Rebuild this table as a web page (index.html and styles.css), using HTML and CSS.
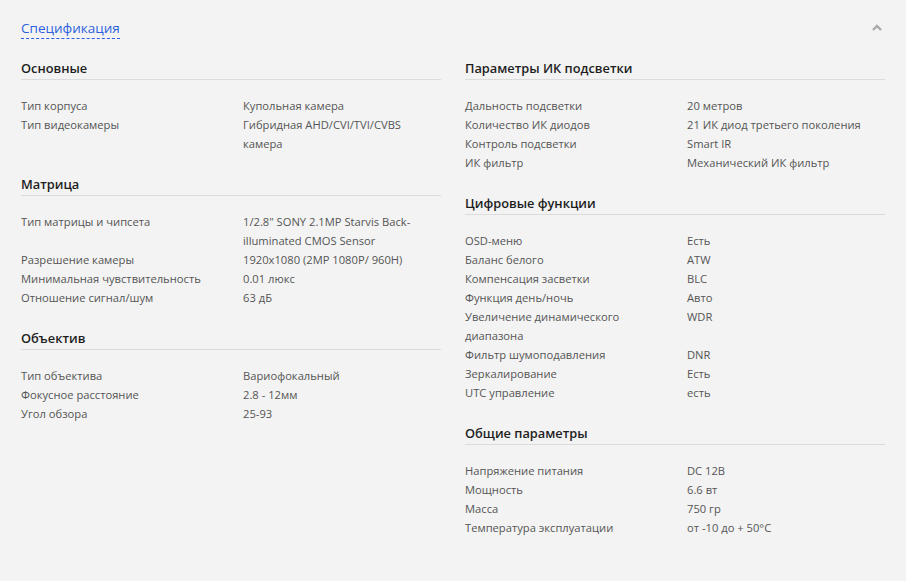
FILE: index.html
```html
<!DOCTYPE html>
<html lang="ru">
<head>
<meta charset="utf-8">
<title>Спецификация</title>
<link rel="stylesheet" href="styles.css">
</head>
<body>
<div class="spec">
  <div class="spec-head">
    <span class="spec-title">Спецификация</span>
    <svg class="chevron" width="10" height="7" viewBox="0 0 10 7"><path d="M1 6 L5 2 L9 6" fill="none" stroke="#a9a9a9" stroke-width="2.4"/></svg>
  </div>
  <div class="spec-grid">
    <div class="col">
      <section class="group">
        <h3 class="group-title">Основные</h3>
        <dl class="rows">
          <dt>Тип корпуса</dt><dd>Купольная камера</dd>
          <dt>Тип видеокамеры</dt><dd>Гибридная AHD/CVI/TVI/CVBS камера</dd>
        </dl>
      </section>
      <section class="group">
        <h3 class="group-title">Матрица</h3>
        <dl class="rows">
          <dt>Тип матрицы и чипсета</dt><dd>1/2.8" SONY 2.1MP Starvis Back-illuminated CMOS Sensor</dd>
          <dt>Разрешение камеры</dt><dd>1920x1080 (2MP 1080P/ 960H)</dd>
          <dt>Минимальная чувствительность</dt><dd>0.01 люкс</dd>
          <dt>Отношение сигнал/шум</dt><dd>63 дБ</dd>
        </dl>
      </section>
      <section class="group">
        <h3 class="group-title">Объектив</h3>
        <dl class="rows">
          <dt>Тип объектива</dt><dd>Вариофокальный</dd>
          <dt>Фокусное расстояние</dt><dd>2.8 - 12мм</dd>
          <dt>Угол обзора</dt><dd>25-93</dd>
        </dl>
      </section>
    </div>
    <div class="col">
      <section class="group">
        <h3 class="group-title">Параметры ИК подсветки</h3>
        <dl class="rows">
          <dt>Дальность подсветки</dt><dd>20 метров</dd>
          <dt>Количество ИК диодов</dt><dd>21 ИК диод третьего поколения</dd>
          <dt>Контроль подсветки</dt><dd>Smart IR</dd>
          <dt>ИК фильтр</dt><dd>Механический ИК фильтр</dd>
        </dl>
      </section>
      <section class="group">
        <h3 class="group-title">Цифровые функции</h3>
        <dl class="rows">
          <dt>OSD-меню</dt><dd>Есть</dd>
          <dt>Баланс белого</dt><dd>ATW</dd>
          <dt>Компенсация засветки</dt><dd>BLC</dd>
          <dt>Функция день/ночь</dt><dd>Авто</dd>
          <dt>Увеличение динамического диапазона</dt><dd>WDR</dd>
          <dt>Фильтр шумоподавления</dt><dd>DNR</dd>
          <dt>Зеркалирование</dt><dd>Есть</dd>
          <dt>UTC управление</dt><dd>есть</dd>
        </dl>
      </section>
      <section class="group">
        <h3 class="group-title">Общие параметры</h3>
        <dl class="rows">
          <dt>Напряжение питания</dt><dd>DC 12B</dd>
          <dt>Мощность</dt><dd>6.6 вт</dd>
          <dt>Масса</dt><dd>750 гр</dd>
          <dt>Температура эксплуатации</dt><dd>от -10 до + 50°C</dd>
        </dl>
      </section>
    </div>
  </div>
</div>
</body>
</html>
```
FILE: styles.css
```css
html, body {
  margin: 0;
  padding: 0;
  background: #f3f3f3;
}
body {
  font-family: "Open Sans", "Noto Sans", sans-serif;
  color: #555555;
}
.spec {
  padding: 19px 21px 0 21px;
}
.spec-head {
  display: flex;
  justify-content: space-between;
  align-items: center;
}
.spec-title {
  font-size: 13.5px;
  line-height: 18.5px;
  color: #2d5fdc;
  border-bottom: 1px dashed #2d5fdc;
}
.chevron {
  display: block;
  margin-right: 3px;
  margin-top: -3px;
}
.spec-grid {
  display: grid;
  grid-template-columns: 420px 420px;
  column-gap: 24px;
  margin-top: 20px;
}
.group {
  margin-bottom: 22.4px;
}
.group-title {
  margin: 0;
  font-size: 12.8px;
  line-height: 18px;
  font-weight: 600;
  color: #1e1e1e;
  padding-bottom: 2px;
  border-bottom: 1px solid #dcdcdc;
}
.rows {
  display: grid;
  grid-template-columns: 222px 1fr;
  margin: 16px 0 0 0;
  font-size: 11.2px;
  line-height: 19px;
}
.rows dt {
  margin: 0;
  padding-right: 20px;
}
.rows dd {
  margin: 0;
}
```
